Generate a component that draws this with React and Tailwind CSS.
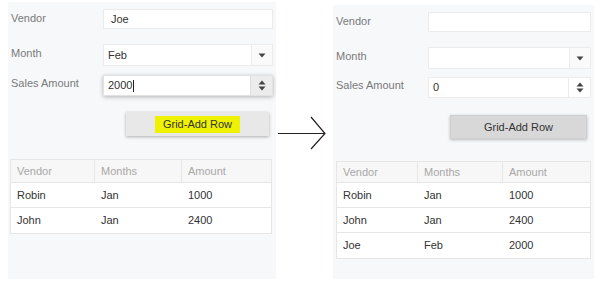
import React from "react";

const font = { fontFamily: '"Liberation Sans", Arial, sans-serif' };

function Caret() {
  return (
    <svg width="8" height="5" viewBox="0 0 8 5">
      <path d="M0.5 0.5 L7.5 0.5 L4 4.5 Z" fill="#444" />
    </svg>
  );
}

function Spinner() {
  return (
    <svg width="8" height="11" viewBox="0 0 8 11">
      <path d="M0.5 4.5 L7.5 4.5 L4 0.5 Z" fill="#444" />
      <path d="M0.5 6.5 L7.5 6.5 L4 10.5 Z" fill="#444" />
    </svg>
  );
}

function Panel({ variant }) {
  const left = variant === "left";
  const rows = left
    ? [
        ["Robin", "Jan", "1000"],
        ["John", "Jan", "2400"],
      ]
    : [
        ["Robin", "Jan", "1000"],
        ["John", "Jan", "2400"],
        ["Joe", "Feb", "2000"],
      ];
  return (
    <div
      className={
        "flex flex-col bg-[#f7f8fa] pl-[3px] pr-[3px] " +
        (left ? "w-[268px] h-[277px] mt-[2px]" : "w-[261px] h-[274px] mt-[5px]")
      }
    >
      {/* Vendor */}
      <div className="flex items-start mt-[7px]">
        <div className="w-[92px] text-[11px] text-[#7a7a7a] pt-[3px] leading-[13px]">Vendor</div>
        <div
          className={
            "h-[20px] bg-white border border-[#ececec] flex items-center pl-[7px] text-[11px] text-[#333] " +
            (left ? "w-[170px]" : "w-[163px]")
          }
        >
          {left ? "Joe" : ""}
        </div>
      </div>
      {/* Month */}
      <div className="flex items-start mt-[15px]">
        <div className="w-[92px] text-[11px] text-[#7a7a7a] pt-[3px] leading-[13px]">Month</div>
        <div
          className={
            "h-[22px] bg-white border border-[#ececec] flex items-stretch text-[11px] text-[#333] " +
            (left ? "w-[170px]" : "w-[163px]")
          }
        >
          <div className="flex-1 flex items-center pl-[4px]">{left ? "Feb" : ""}</div>
          <div className="w-[21px] border-l border-[#ececec] bg-[#fafafa] flex items-center justify-center">
            <Caret />
          </div>
        </div>
      </div>
      {/* Sales */}
      <div className={"flex items-start " + (left ? "mt-[9px]" : "mt-[8px]")}>
        <div className="w-[92px] text-[11px] text-[#7a7a7a] pt-[2px] leading-[13px]">Sales Amount</div>
        <div
          className={
            "h-[21px] bg-white border flex items-stretch text-[11px] text-[#333] " +
            (left
              ? "w-[170px] border-[#e2e2e2] shadow-[0_1px_4px_rgba(0,0,0,0.28)]"
              : "w-[163px] border-[#ececec]")
          }
        >
          <div className="flex-1 flex items-center pl-[4px]">
            {left ? (
              <span className="flex items-center">
                2000<span className="inline-block w-px h-[12px] bg-[#222] ml-px" />
              </span>
            ) : (
              "0"
            )}
          </div>
          <div
            className={
              "w-[22px] flex items-center justify-center border-l " +
              (left ? "bg-[#ececec] border-[#dedede]" : "bg-white border-[#ececec]")
            }
          >
            <Spinner />
          </div>
        </div>
      </div>
      {/* Button */}
      <div className={"flex justify-end mr-[4px] " + (left ? "mt-[16px]" : "mt-[17px]")}>
        <div
          className={
            "h-[24px] flex items-center justify-center text-[11px] text-[#333] " +
            (left
              ? "w-[143px] bg-[#e8e8e8] shadow-[0_1px_3px_rgba(0,0,0,0.3)]"
              : "w-[137px] bg-[#d8d8d8] border border-[#cfcfcf] shadow-[0_1px_3px_rgba(0,0,0,0.25)]")
          }
        >
          {left ? (
            <span className="bg-[#eef200] px-[8px] py-[3px] leading-[11px]">Grid-Add Row</span>
          ) : (
            <span>Grid-Add Row</span>
          )}
        </div>
      </div>
      {/* Table */}
      <div
        className={
          "border border-[#e6e6e6] bg-white text-[11px] " +
          (left ? "mt-[23px] ml-[-1px] w-[262px]" : "mt-[22px] ml-0 w-[255px]")
        }
      >
        <div
          className={
            "grid bg-[#f7f7f7] text-[#a8a8a8] border-b border-[#e6e6e6] " +
            (left ? "grid-cols-[84px_87px_1fr] h-[23px]" : "grid-cols-[81px_85px_1fr] h-[21px]")
          }
        >
          <div className="flex items-center pl-[6px] border-r border-[#e6e6e6]">Vendor</div>
          <div className="flex items-center pl-[6px] border-r border-[#e6e6e6]">Months</div>
          <div className="flex items-center pl-[6px]">Amount</div>
        </div>
        {rows.map((r, i) => (
          <div
            key={i}
            className={
              "grid h-[25px] text-[#333] " +
              (i < rows.length - 1 ? "border-b border-[#e6e6e6] " : "") +
              (left ? "grid-cols-[84px_87px_1fr]" : "grid-cols-[81px_85px_1fr]")
            }
          >
            <div className="flex items-center pl-[6px]">{r[0]}</div>
            <div className="flex items-center pl-[6px]">{r[1]}</div>
            <div className="flex items-center pl-[6px]">{r[2]}</div>
          </div>
        ))}
      </div>
    </div>
  );
}

export default function App() {
  return (
    <div className="w-[602px] h-[293px] bg-white flex items-start" style={font}>
      <div className="ml-[8px]">
        <Panel variant="left" />
      </div>
      <div className="w-[57px] h-[293px] flex items-start">
        <svg width="57" height="40" viewBox="0 0 57 40" className="mt-[114px]">
          <path d="M2 19.5 L49 19.5" stroke="#222" strokeWidth="1.2" fill="none" />
          <path d="M35 3 L49 19.5 L35 35" stroke="#222" strokeWidth="1.2" fill="none" />
        </svg>
      </div>
      <Panel variant="right" />
    </div>
  );
}
